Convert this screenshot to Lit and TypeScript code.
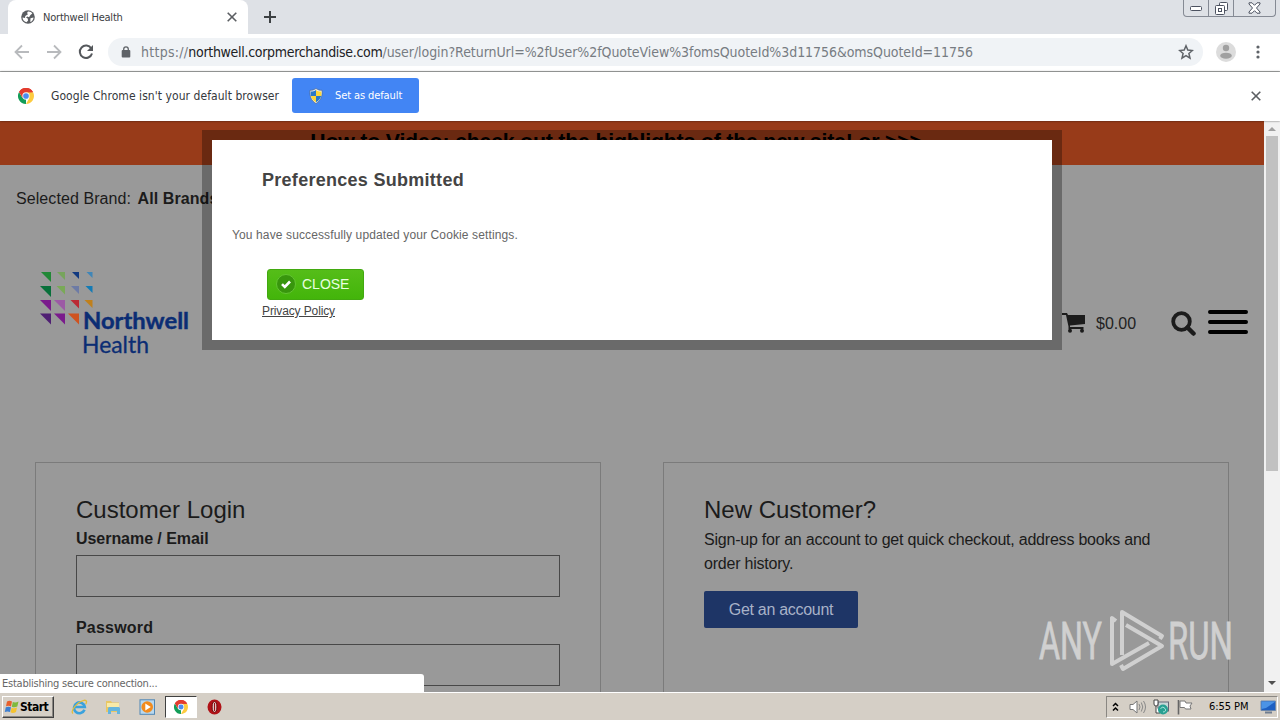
import { LitElement, html, css, svg } from "lit";
import { customElement } from "lit/decorators.js";

const chromeLogo = (size: number) => html`<svg width=${size} height=${size} viewBox="0 0 48 48">
  <path fill="#e33b2e" d="M24 24 3.2 12A24 24 0 0 1 44.800 12z" />
  <path fill="#129d58" d="M24 24 24 48A24 24 0 0 1 3.200 12L13.600 30z" />
  <path fill="#fdcb3f" d="M24 13H45.300A24 24 0 0 1 24 48L34 30z" />
  <path fill="#e33b2e" d="M3.200 12 13.600 30 24 13H45.300L44.800 12A24 24 0 0 0 3.200 12z" />
  <circle cx="24" cy="24" r="11" fill="#f4f4f4" /><circle cx="24" cy="24" r="8.500" fill="#4b8bf0" />
</svg>`;

const cross = html`<svg width="10" height="10" viewBox="0 0 10 10">
  <path d="M.7.7l8.600 8.600M9.300.7l-8.600 8.600" stroke="#5b5e62" stroke-width="1.600" fill="none" />
</svg>`;

// right edge, top edge, side, colour
const triangles: [number, number, number, string][] = [
  [51, 271, 10, "#218836"], [65, 271, 8, "#77a45c"], [79, 271, 7, "#123a80"], [92.500, 271, 6, "#3f86b8"],
  [51, 285, 11, "#08703a"], [65, 285, 8.500, "#79a957"], [79, 285, 8, "#6d7ba5"], [92.500, 285, 7, "#147bb5"],
  [51, 299, 11, "#7a1b8c"], [65, 299, 11, "#9c5aa5"], [79, 299, 8.500, "#bb2a35"], [92.500, 299, 8, "#c0801c"],
  [51, 312.500, 11, "#4f1f73"], [65, 312.500, 11, "#7a1b8c"], [79, 312.500, 11, "#cf5320"],
];

@customElement("app-root")
export class AppRoot extends LitElement {
  static styles = css`
    :host { display: flex; flex-direction: column; position: relative; width: 1280px; height: 720px; overflow: hidden;
      font-family: "Liberation Sans", Arial, sans-serif; background: #fff; }
    * { box-sizing: border-box; }
    svg { display: block; flex: none; }
    .ui { font-family: "DejaVu Sans Condensed", "DejaVu Sans", sans-serif; font-stretch: condensed; white-space: nowrap; }
    .tabs { display: flex; height: 34px; background: #dee1e6; padding-left: 8px; flex: none; }
    .tab { display: flex; align-items: center; width: 240px; height: 34px; background: #fff; border-radius: 8px 8px 0 0;
      padding: 0 11px 0 13px; }
    .tab svg:first-child { margin-right: 8px; }
    .tabname { flex: 1; font-size: 11px; letter-spacing: -0.210px; color: #3c4043; }
    .plus { margin: 11px 0 0 16px; }
    .win { display: flex; margin-left: auto; margin-right: 4px; width: 93px; height: 17px; border: 1px solid #858a94;
      border-top: 0; border-radius: 0 0 4px 4px; }
    .win span { display: flex; align-items: center; justify-content: center; width: 25px; border-right: 1px solid #858a94; }
    .win span:last-child { width: 41px; border: 0; }
    .bar { display: flex; align-items: center; height: 38px; flex: none; border-bottom: 1px solid #b3b5b4; padding: 0 14px 1px; }
    .bar > svg { margin-right: 16px; }
    .omni { display: flex; flex: none; align-items: center; width: 1095px; height: 28px; border-radius: 14px; background: #f0f3f6;
      padding: 0 9px 0 13px; margin-left: -2px; }
    .url { flex: 1; margin-left: 10px; font-size: 14px; letter-spacing: -0.100px; color: #777c82; }
    .url i { font-style: normal; letter-spacing: 0.270px; }
    .url b { font-weight: 400; color: #202124; letter-spacing: -0.300px; }
    .url u { text-decoration: none; letter-spacing: -0.060px; }
    .bar > .avatar { margin: 0 10px 0 13px; }
    .bar > .dots { margin-left: 10px; margin-right: 0; }
    .info { display: flex; align-items: center; height: 49px; flex: none; padding: 0 18px; position: relative; z-index: 2;
      box-shadow: 0 0 2px rgba(0,0,0,.6); background: #fff; }
    .info > svg, .ask { position: relative; top: -1px; }
    .ask { margin-left: 17px; width: 241px; font-size: 12px; color: #35383c; letter-spacing: 0.060px; }
    .set { display: flex; align-items: center; width: 127px; height: 35px; background: #4285f4; color: #fff; border-radius: 3px;
      font-size: 11px; letter-spacing: -0.100px; padding-left: 16px; gap: 11px; margin-top: -2px; }
    .info > svg:last-child { margin-left: auto; margin-right: 1px; }
    .view { display: flex; height: 571px; flex: none; position: relative; }
    .page { position: relative; width: 1264px; height: 571px; background: #999; overflow: hidden; color: #1b1b1b; }
    .banner { height: 44px; background: #983b19; text-align: center; font-weight: 700; font-size: 21.300px; line-height: 24px;
      padding: 9px 32px 0 0; color: #000; white-space: nowrap; letter-spacing: -0.200px; }
    .brand { padding: 24px 0 0 16px; font-size: 16px; line-height: 20px; height: 105px; letter-spacing: 0.080px; }
    .brand b { margin-left: 2px; }
    .head { display: flex; height: 192px; padding-left: 38px; }
    .logo { width: 154px; height: 90px; }
    .tools { display: flex; align-items: center; height: 48px; margin: 29px 0 0 870px; }
    .price { margin: 1px 0 0 10px; width: 75px; font-size: 16px; color: #222; }
    .tools svg:nth-of-type(3) { margin: -2px 0 0 12px; }
    .cards { display: flex; gap: 62px; padding-left: 35px; }
    .card { width: 566px; height: 300px; border: 1px solid #7b7b7b; padding: 31px 40px; }
    h2 { margin: 0; font-size: 24px; font-weight: 400; line-height: 31px; }
    .card label { display: block; font-size: 16px; font-weight: 700; line-height: 24px; margin: 2px 0 4px; letter-spacing: -0.050px; }
    .field { height: 42px; border: 1px solid #484848; margin-bottom: 19px; }
    .card .second { margin-bottom: 4px; letter-spacing: 0.200px; }
    p { margin: 3px 0 15px; font-size: 16px; line-height: 24px; letter-spacing: -0.215px; }
    .get { width: 154px; height: 37px; background: #1e3566; color: #a8b2c8; border-radius: 2px; text-align: center;
      font-size: 16px; line-height: 37px; letter-spacing: -0.300px; }
    .modal { position: absolute; left: 202px; top: 9px; width: 860px; height: 220px; border: 10px solid rgba(0,0,0,.3);
      background: #fff; background-clip: padding-box; padding: 29px 20px; color: #555; }
    .modal h3 { margin: 0 0 0 30px; font-size: 18px; line-height: 22px; color: #444; letter-spacing: 0.280px; }
    .msg { font-size: 12px; line-height: 16px; margin-top: 36px; letter-spacing: 0.120px; color: #666; }
    .close { display: flex; align-items: center; gap: 6px; margin: 26px 0 0 35px; width: 97px; height: 31px;
      border-radius: 3px; background: linear-gradient(#55bd19, #43b50a); border: 1px solid #42a910; color: #e8ffe0;
      font-size: 14px; padding: 0 0 2px 8px; }
    .policy { margin: 3px 0 0 30px; font-size: 12px; line-height: 16px; text-decoration: underline; color: #444; letter-spacing: -0.120px; }
    .scroll { display: flex; flex-direction: column; align-items: center; width: 16px; background: #f1f1f1; padding-top: 5px; }
    .thumb { width: 12px; height: 335px; background: #c1c1c1; margin: 5px 0 auto; }
    .scroll svg:last-child { margin-bottom: 6px; }
    .status { position: absolute; left: 0; bottom: 0; width: 424px; height: 18px; background: #fff;
      border-radius: 0 3px 0 0; font-size: 11px; line-height: 19px; color: #666; padding-left: 2px; letter-spacing: -0.230px; }
    .mark { position: absolute; left: 1030px; top: 482px; }
    .task { display: flex; align-items: center; height: 28px; background: #d5cfc6; border-top: 1px solid #fff; padding: 0 2px; }
    .start { display: flex; align-items: center; width: 52px; height: 22px; border: 1px solid; border-color: #fff #404040 #404040 #fff;
      box-shadow: inset -1px -1px #8a8782; font-size: 12px; font-weight: 700; color: #000; gap: 0; padding-left: 1px; letter-spacing: -0.500px; }
    .quick { display: flex; align-items: center; margin-left: 17px; }
    .quick svg { margin-right: 17px; }
    .active { display: flex; align-items: center; justify-content: center; width: 32px; height: 22px; background: #fff;
      border: 1px solid; border-color: #404040 #fff #fff #404040; margin: 0 10px 0 -8px; }
    .active svg { margin: 0; }
    .tray { display: flex; align-items: center; margin-left: auto; width: 172px; height: 22px; border: 1px solid;
      border-color: #8a8782 #fff #fff #8a8782; padding-left: 5px; font-size: 11px; color: #000; }
    .sound { margin-left: 9px; }
    .net { margin-left: 6px; }
    .flag { margin-left: 7px; }
    .time { width: 51px; margin-left: 15px; letter-spacing: -0.050px; }
  `;

  private tabStrip() {
    return html`<div class="tabs">
      <div class="tab">
        <svg width="14" height="14" viewBox="0 0 14 14"><circle cx="7" cy="7" r="6.800" fill="#5a5d61" />
          <path fill="#fff" d="M7 1.500c2-.2 3.500.7 4.300 2L9.500 5 8 7.300 6.300 6.500 5 7.500l1.700 1 .4 2L5.500 12.300C3 11.700 1.600 9.500 1.500 7.500L4 8l.3-2L7 4.200 6 3z" />
          <path fill="#fff" d="M9.500 8.200l3-.7c0 2-1.500 4-3.200 4.600z" /></svg>
        <span class="tabname ui">Northwell Health</span>${cross}
      </div>
      <svg class="plus" width="12" height="12" viewBox="0 0 12 12"><path d="M6 0v12M0 6h12" stroke="#3c4043" stroke-width="2" /></svg>
      <div class="win">
        <span><svg width="13" height="6" viewBox="0 0 13 6"><rect x=".5" y=".5" width="11" height="4" rx="1" fill="#fff" stroke="#4c5260" transform="translate(0 1)" /></svg></span>
        <span><svg width="13" height="13" viewBox="0 0 13 13" fill="#fff" stroke="#4c5260"><rect x="4.500" y=".5" width="8" height="8" rx="1" /><rect x=".5" y="3.500" width="9" height="9" rx="1" /><rect x="3.500" y="6.500" width="3" height="3" /></svg></span>
        <span><svg width="13" height="12" viewBox="0 0 13 12"><path d="M1 .8h3L6.500 3.300 9 .8h3V2L8.500 6 12 10v1.200H9L6.500 8.700 4 11.200H1V10L4.500 6 1 2z" fill="#fff" stroke="#4c5260" /></svg></span>
      </div>
    </div>`;
  }

  private toolbar() {
    return html`<div class="bar">
      <svg width="16" height="16" viewBox="0 0 16 16" fill="none" stroke="#b8babd" stroke-width="1.800"><path d="M15 8H2M8 1.500 1.500 8 8 14.500" /></svg>
      <svg width="16" height="16" viewBox="0 0 16 16" fill="none" stroke="#b8babd" stroke-width="1.800"><path d="M1 8h13M8 1.500 14.500 8 8 14.500" /></svg>
      <svg width="16" height="16" viewBox="0 0 16 16"><path d="M13.300 4.500A6.200 6.200 0 1 0 14 9.500" fill="none" stroke="#55585c" stroke-width="2" /><path d="M15 1v6H9z" fill="#55585c" /></svg>
      <div class="omni">
        <svg width="10" height="12" viewBox="0 0 10 12"><rect x=".7" y="4" width="8.600" height="7.500" rx="1" fill="#5f6368" /><path d="M2.700 5V3.200a2.300 2.300 0 0 1 4.600 0V5" fill="none" stroke="#5f6368" stroke-width="1.300" /></svg>
        <span class="url ui"><i>https://</i><b>northwell.corpmerchandise.com</b><u>/user/login?ReturnUrl=%2fUser%2fQuoteView%3fomsQuoteId%3d11756&amp;omsQuoteId=11756</u></span>
        <svg width="16" height="16" viewBox="0 0 16 16"><path d="M8 1.800l1.800 4.300 4.600.4-3.500 3 1.100 4.600L8 11.600l-4 2.500 1.100-4.600-3.500-3 4.600-.4z" fill="none" stroke="#5f6368" stroke-width="1.500" /></svg>
      </div>
      <svg class="avatar" width="20" height="20" viewBox="0 0 20 20"><circle cx="10" cy="10" r="10" fill="#dcdcdc" /><circle cx="10" cy="6" r="3.200" fill="#a0a0a0" /><ellipse cx="10" cy="13.700" rx="5.800" ry="3" fill="#a0a0a0" /></svg>
      <svg class="dots" width="4" height="14" viewBox="0 0 4 14" fill="#5f6368"><circle cx="2" cy="2" r="1.600" /><circle cx="2" cy="7" r="1.600" /><circle cx="2" cy="12" r="1.600" /></svg>
    </div>
    <div class="info">
      ${chromeLogo(16)}
      <span class="ask ui">Google Chrome isn't your default browser</span>
      <div class="set ui">
        <svg width="16" height="16" viewBox="0 0 16 16"><path d="M8 .5C6 2 4 2.400 2 2.300 1.500 8 3 12.500 8 15.500c5-3 6.500-7.500 6-13.200C12 2.400 10 2 8 .5z" fill="#e8eef5" stroke="#506070" stroke-width=".6" />
          <path d="M8 2v6H2.800C2.600 6.500 2.600 5 2.700 3.500 5 3.500 6.500 3 8 2z" fill="#2878c8" /><path d="M8 2v6h5.200c.2-1.500.2-3 .1-4.500C11 3.500 9.500 3 8 2z" fill="#fbd63a" />
          <path d="M8 8v6.300C5 12.500 3.500 10.500 2.800 8z" fill="#fbd63a" /><path d="M8 8v6.300c3-1.800 4.500-3.800 5.200-6.300z" fill="#2878c8" /></svg>
        Set as default
      </div>
      ${cross}
    </div>`;
  }

  private logo() {
    return html`<svg class="logo" viewBox="38 269 154 90">
      ${triangles.map(([x, y, s, c]) => svg`<path d="M${x - s} ${y}H${x}V${y + s}z" fill=${c} />`)}
      <g fill="#0b2d74" font-family="Lato, Open Sans, sans-serif">
        <text x="83" y="327.500" font-size="22" font-weight="700" textLength="106" lengthAdjust="spacingAndGlyphs" stroke="#0b2d74" stroke-width=".4">Northwell</text>
        <text x="82" y="351.500" font-size="23" textLength="67" lengthAdjust="spacingAndGlyphs" stroke="#0b2d74" stroke-width=".3">Health</text>
      </g>
    </svg>`;
  }

  private page() {
    return html`<div class="view">
      <div class="page">
        <div class="banner">How to Video: check out the highlights of the new site! or &gt;&gt;&gt;</div>
        <div class="brand">Selected Brand: <b>All Brands</b></div>
        <div class="head">
          ${this.logo()}
          <div class="tools">
            <svg width="24" height="22" viewBox="0 0 24 22" fill="#1c1c1c"><path d="M0 1h5l1 2h17v9L8 13.500v1.500h13.500v2H6.500v-2.500L4 3H0z" /><circle cx="8" cy="18.700" r="2" /><circle cx="20" cy="18.700" r="2" /></svg>
            <span class="price">$0.00</span>
            <svg width="25" height="25" viewBox="0 0 25 25" fill="none" stroke="#1c1c1c"><circle cx="10.500" cy="10.500" r="8.300" stroke-width="3.800" /><path d="M16.500 16.500l6 6" stroke-width="4.500" stroke-linecap="round" /></svg>
            <svg width="40" height="26" viewBox="0 0 40 26" stroke="#000" stroke-width="4" stroke-linecap="round"><path d="M2 3h36M2 13h36M2 23h36" /></svg>
          </div>
        </div>
        <div class="cards">
          <div class="card">
            <h2>Customer Login</h2>
            <label>Username / Email</label><div class="field"></div>
            <label class="second">Password</label><div class="field"></div>
          </div>
          <div class="card">
            <h2>New Customer?</h2>
            <p>Sign-up for an account to get quick checkout, address books and order history.</p>
            <div class="get">Get an account</div>
          </div>
        </div>
        <div class="modal">
          <h3>Preferences Submitted</h3>
          <div class="msg">You have successfully updated your Cookie settings.</div>
          <div class="close">
            <svg width="20" height="20" viewBox="0 0 20 20"><circle cx="10" cy="10" r="9.500" fill="#38960d" stroke="#63c432" /><path d="M6 10.200l2.800 2.800L14 7.500" fill="none" stroke="#fff" stroke-width="2.600" /></svg>
            CLOSE
          </div>
          <div class="policy">Privacy Policy</div>
        </div>
      </div>
      <div class="scroll">
        <svg width="8" height="5" viewBox="0 0 8 5"><path d="M0 5l4-4 4 4z" fill="#a0a0a0" /></svg>
        <div class="thumb"></div>
        <svg width="8" height="5" viewBox="0 0 8 5"><path d="M0 0l4 4 4-4z" fill="#505050" /></svg>
      </div>
      <div class="status ui">Establishing secure connection...</div>
      <svg class="mark" width="210" height="76" viewBox="1030 603 210 76">
        <g fill="#d0d0d0" stroke="#d0d0d0" stroke-width=".8" font-family="Roboto, sans-serif" font-size="52">
          <text x="1039" y="659" textLength="63" lengthAdjust="spacingAndGlyphs">ANY</text>
          <text x="1168" y="659" textLength="65" lengthAdjust="spacingAndGlyphs">RUN</text>
        </g>
        <g fill="none" stroke="#d0d0d0" stroke-width="4" stroke-linejoin="round">
          <path d="M1116 621l-4-3v46l37-21" /><path d="M1122 655v-43l40 24-2 3" />
          <path d="M1126 625l36 21-39 23-2-4" />
        </g>
      </svg>
    </div>`;
  }

  private taskbar() {
    return html`<div class="task ui">
      <div class="start">
        <svg width="16" height="16" viewBox="0 0 16 16"><path d="M3 2.500Q5.500 1 8 2.500L7 7.500Q4.500 6 2 7.300z" fill="#e8602c" /><path d="M8.800 3Q11.500 4 14.500 2.500L13.300 7.500Q10.500 9 7.800 7.800z" fill="#7fb93c" /><path d="M1.800 8.300Q4.500 7 7 8.300L6 13Q3.500 12 .8 13z" fill="#3d7fd0" /><path d="M7.600 8.800Q10 10 13 8.500L12 13Q9 14.800 6.500 13.300z" fill="#f5c330" /></svg>
        Start
      </div>
      <div class="quick">
        <svg width="17" height="16" viewBox="0 0 17 16"><path d="M13.500 10.800A5.400 5.400 0 1 1 13.800 8H4" fill="none" stroke="#3aa2dd" stroke-width="2.600" /><path d="M2 14.500C-1 12 6 3 13 1.300c3-.5 3 1.700 1.700 4" fill="none" stroke="#e2bd3a" stroke-width="1.300" /></svg>
        <svg width="17" height="16" viewBox="0 0 17 16"><path d="M1 2h5l1 1.500h7V13H1z" fill="#e8c765" /><path d="M2 4h12v4H2z" fill="#f8eaa8" /><path d="M3 15V9.500Q3 8 4.500 8h9Q15 8 15 9.500V15h-3v-3H6v3z" fill="#65b5de" /></svg>
        <svg width="17" height="16" viewBox="0 0 17 16"><rect x="1" y=".8" width="14.500" height="14.500" fill="#b8d8ef" stroke="#5087b5" /><circle cx="8.200" cy="8" r="5.800" fill="#f28b1d" /><path d="M6.300 4.500v7l5.500-3.500z" fill="#fff" /></svg>
        <div class="active">${chromeLogo(14)}</div>
        <svg width="16" height="16" viewBox="0 0 16 16"><ellipse cx="7.500" cy="8" rx="7" ry="7.500" fill="#b01217" /><ellipse cx="7.500" cy="8" rx="2.400" ry="5.300" fill="#eee3dd" stroke="#6b0508" /><path d="M7.500 4v8" stroke="#941014" stroke-width="1.300" /></svg>
      </div>
      <div class="tray">
        <svg width="8" height="10" viewBox="0 0 8 10" fill="none" stroke="#000" stroke-width="1.500"><path d="M1 4l2.500-2.500L6 4M1 8.500 3.500 6 6 8.500" /></svg>
        <svg class="sound" width="18" height="16" viewBox="0 0 18 16"><path d="M1 5.500h3L8 2v12l-4-3.500H1z" fill="#fff" stroke="#777" /><path d="M10 5q2 3 0 6M12.300 3.500q3 4.500 0 9M14.500 2q4 6 0 12" fill="none" stroke="#888" stroke-width="1" /></svg>
        <svg class="net" width="17" height="16" viewBox="0 0 17 16"><rect x="5" y="3" width="10.500" height="9" fill="#c8d8d8" stroke="#667" /><path d="M1 1v4q0 2 2 2t2-2V1zM3 7v7h4" fill="#fff" stroke="#444" /><circle cx="10" cy="10.500" r="5" fill="#27a092" /><path d="M7.500 9.500q2.500-3 4.500 0t-2 3.500" fill="none" stroke="#aee6dc" /></svg>
        <svg class="flag" width="17" height="16" viewBox="0 0 17 16"><path d="M1.500 1v14.500" stroke="#666" stroke-width="1.600" /><path d="M3 2h5l1 2h6l-2 3 1 3H8.500l-1-1.500H3z" fill="#fff" stroke="#777" /></svg>
        <span class="time">6:55 PM</span>
        <svg width="17" height="14" viewBox="0 0 17 14"><path d="M1 1h14.500v9.500H1z" fill="#1d5fc2" stroke="#6c87ab" /><path d="M1.500 1.500h14L6 8 1.500 9z" fill="#4b93e6" /><path d="M5 12.500h7" stroke="#6f7d90" stroke-width="2" /></svg>
      </div>
    </div>`;
  }

  render() {
    return html`${this.tabStrip()}${this.toolbar()}${this.page()}${this.taskbar()}`;
  }
}
